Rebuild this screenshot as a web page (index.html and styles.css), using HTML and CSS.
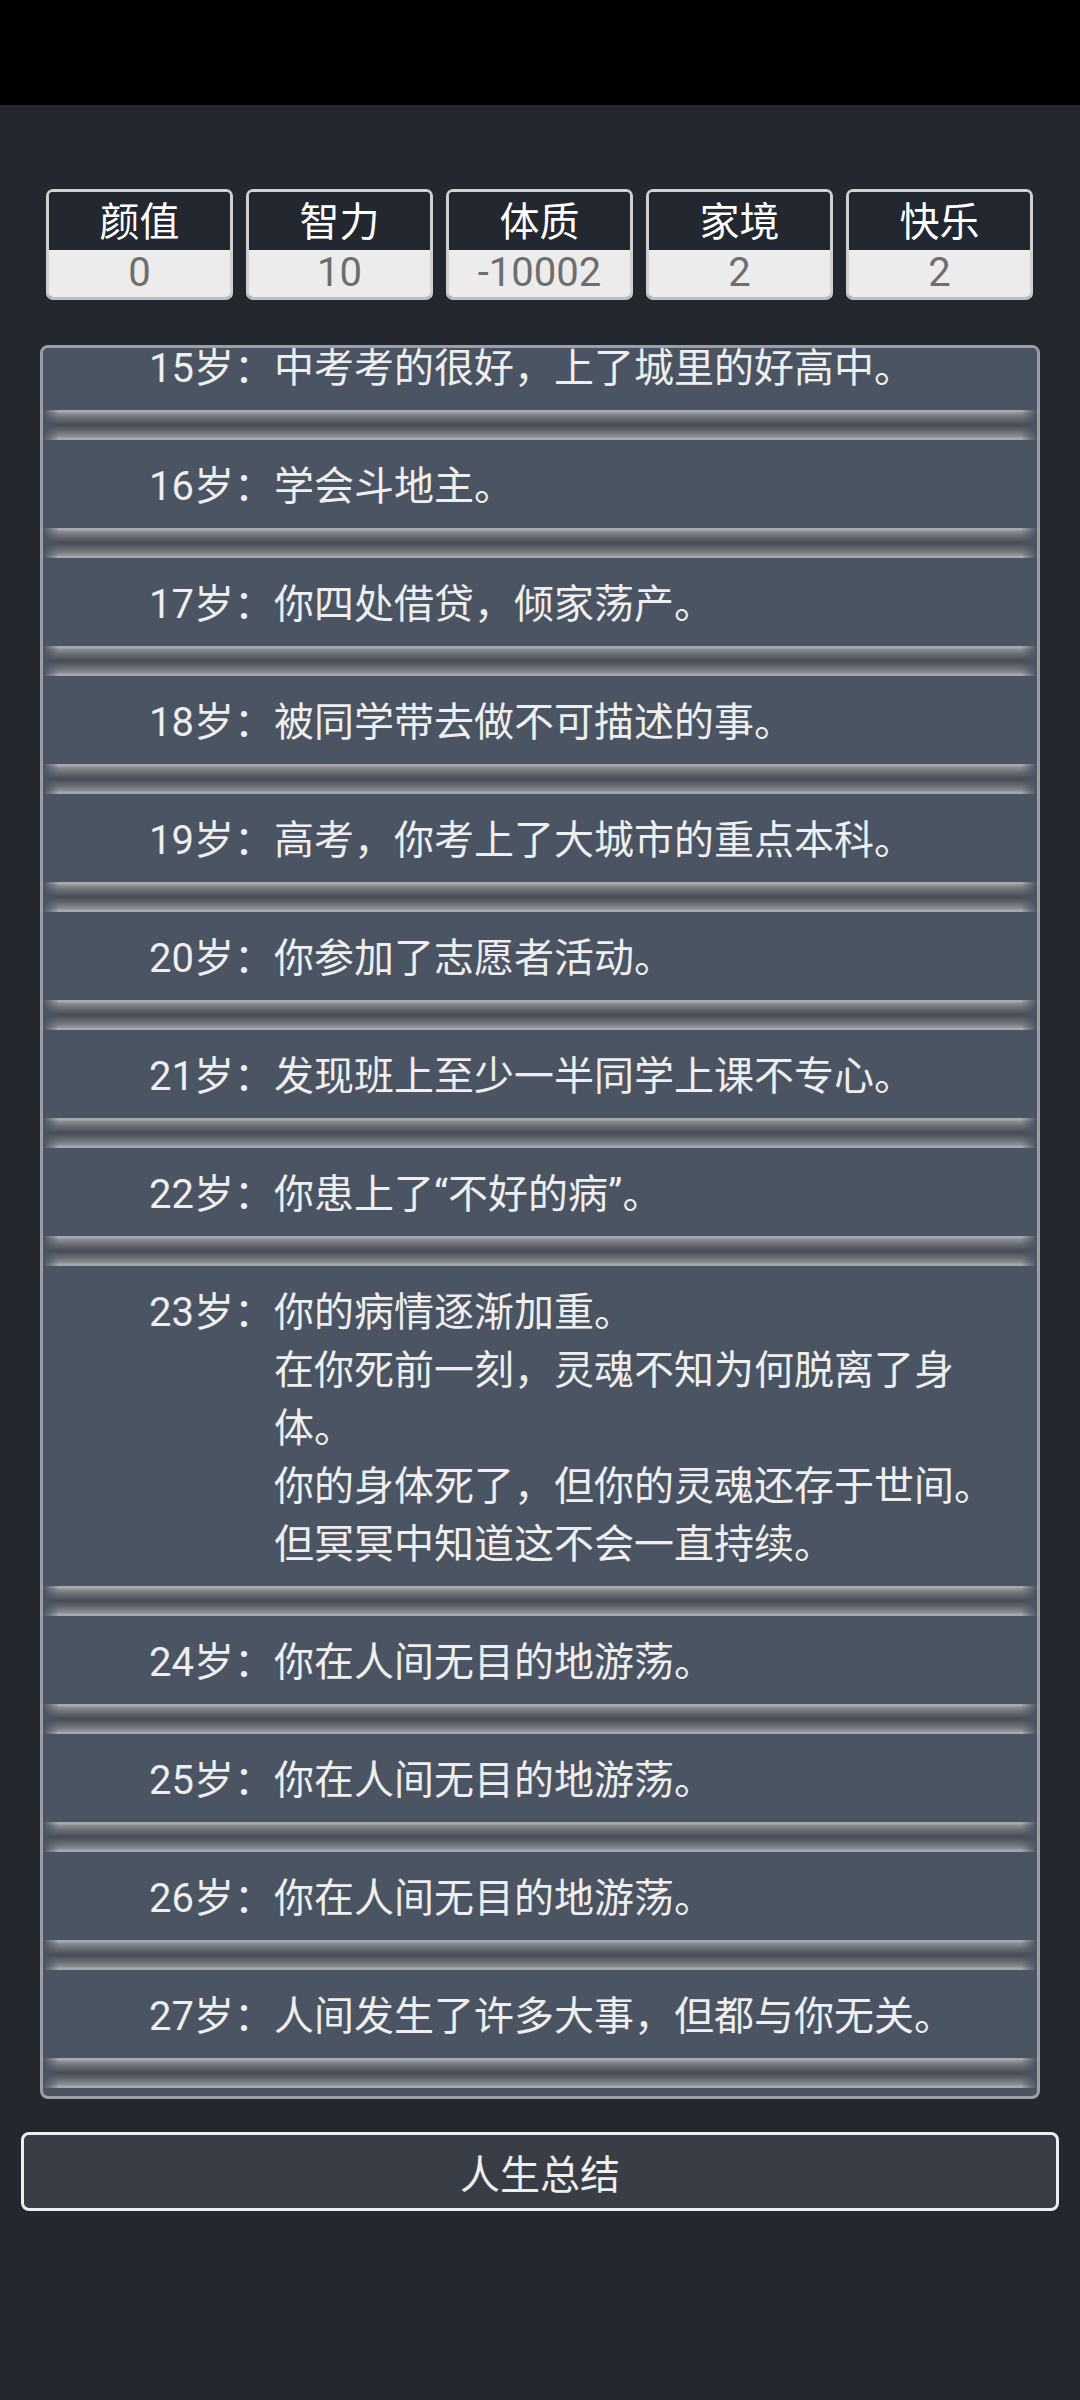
FILE: index.html
```html
<!DOCTYPE html>
<html lang="zh-CN">
  <head>
    <meta charset="UTF-8" />
    <meta name="viewport" content="width=device-width, initial-scale=1.0" />
    <title>人生重开</title>
    <link rel="stylesheet" href="styles.css">
  </head>
  <body>
    <div class="status-bar"></div>
    <div class="stats">
      <div class="stat">
        <div class="stat-name">颜值</div>
        <div class="stat-value">0</div>
      </div>
      <div class="stat">
        <div class="stat-name">智力</div>
        <div class="stat-value">10</div>
      </div>
      <div class="stat">
        <div class="stat-name">体质</div>
        <div class="stat-value">-10002</div>
      </div>
      <div class="stat">
        <div class="stat-name">家境</div>
        <div class="stat-value">2</div>
      </div>
      <div class="stat">
        <div class="stat-name">快乐</div>
        <div class="stat-value">2</div>
      </div>
    </div>
    <div class="log">
      <ul class="log-track">
        <li class="entry"><span class="age">15岁：</span><div class="text">中考考的很好，上了城里的好高中。</div></li>
        <li class="entry"><span class="age">16岁：</span><div class="text">学会斗地主。</div></li>
        <li class="entry"><span class="age">17岁：</span><div class="text">你四处借贷，倾家荡产。</div></li>
        <li class="entry"><span class="age">18岁：</span><div class="text">被同学带去做不可描述的事。</div></li>
        <li class="entry"><span class="age">19岁：</span><div class="text">高考，你考上了大城市的重点本科。</div></li>
        <li class="entry"><span class="age">20岁：</span><div class="text">你参加了志愿者活动。</div></li>
        <li class="entry"><span class="age">21岁：</span><div class="text">发现班上至少一半同学上课不专心。</div></li>
        <li class="entry"><span class="age">22岁：</span><div class="text">你患上了“不好的病”。</div></li>
        <li class="entry">
          <span class="age">23岁：</span>
          <div class="text">
            <p>你的病情逐渐加重。</p>
            <p>在你死前一刻，灵魂不知为何脱离了身体。</p>
            <p>你的身体死了，但你的灵魂还存于世间。</p>
            <p>但冥冥中知道这不会一直持续。</p>
          </div>
        </li>
        <li class="entry"><span class="age">24岁：</span><div class="text">你在人间无目的地游荡。</div></li>
        <li class="entry"><span class="age">25岁：</span><div class="text">你在人间无目的地游荡。</div></li>
        <li class="entry"><span class="age">26岁：</span><div class="text">你在人间无目的地游荡。</div></li>
        <li class="entry"><span class="age">27岁：</span><div class="text">人间发生了许多大事，但都与你无关。</div></li>
      </ul>
    </div>
    <button class="summary">人生总结</button>
  </body>
</html>
```

FILE: styles.css
```css
body {
  font-family: Roboto, "Noto Sans CJK SC", sans-serif;
  background-color: #222730;
  color: #eeeeee;
  margin: 0;
  padding: 0;
  height: 2400px;
}

.status-bar {
  height: 105px;
  background-color: #000;
}

.stats {
  display: grid;
  grid-template-columns: repeat(5, 1fr);
  gap: 13px;
  margin: 84px 47px 0 46px;
}

.stat {
  border: 3px solid #d0d0d0;
  border-bottom-color: #bdbdbd;
  border-radius: 7px;
  overflow: hidden;
  text-align: center;
  font-size: 40px;
}

.stat-name {
  height: 58px;
  line-height: 62px;
  background-color: #222730;
  color: #fff;
}

.stat-value {
  height: 47px;
  line-height: 46px;
  background-color: #ececec;
  color: #6e6e6e;
}

.log {
  margin: 45px 40px 0 40px;
  height: 1748px;
  border: 3px solid #9c9fa4;
  border-radius: 8px;
  background-color: #4b5462;
  overflow: hidden;
}

.log-track {
  list-style: none;
  margin: -26px 0 0 0;
  padding: 0;
}

.entry {
  display: flex;
  padding: 18px 20px 42px 106px;
  font-size: 40px;
  line-height: 58px;
  background:
    linear-gradient(to right, #4b5462, rgba(75, 84, 98, 0) 16px, rgba(75, 84, 98, 0) calc(100% - 16px), #4b5462) left bottom / 100% 30px no-repeat,
    linear-gradient(#a7abb1 0, #a7abb1 2px, #8c9096 3px, #6a6e76 8px, #464b55 15px, #6a6e76 22px, #8c9096 27px, #a5a9af 28px, #a5a9af 30px) left bottom / 100% 30px no-repeat,
    #4b5462;
}

.age {
  flex: none;
  white-space: nowrap;
}

.text {
  flex: 1;
}

.text p {
  margin: 0;
}

.summary {
  display: block;
  box-sizing: border-box;
  width: 1038px;
  height: 79px;
  margin: 33px 21px 0 21px;
  border: 3px solid #eeeeee;
  border-radius: 8px;
  background-color: #393d46;
  color: #eeeeee;
  font-family: Roboto, "Noto Sans CJK SC", sans-serif;
  font-size: 40px;
  padding: 0;
}
```
